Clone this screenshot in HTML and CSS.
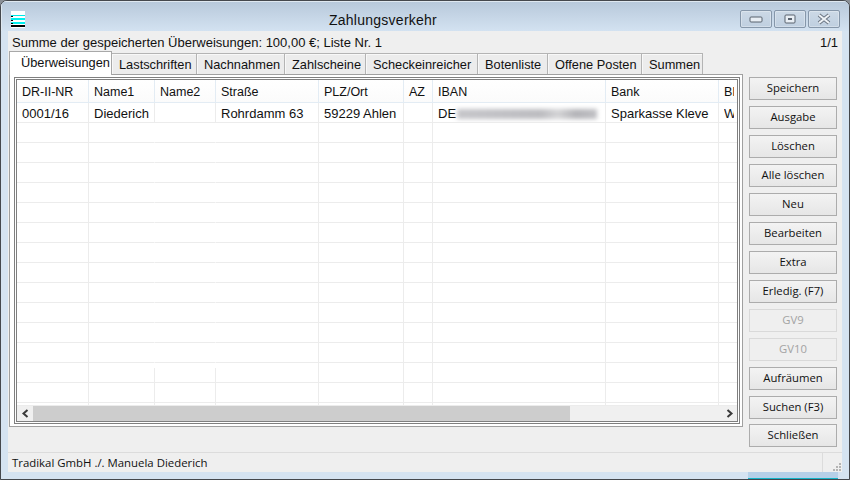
FILE: index.html
```html
<!DOCTYPE html>
<html lang="de">
<head>
<meta charset="utf-8">
<title>Zahlungsverkehr</title>
<link rel="stylesheet" href="styles.css">
</head>
<body>
<div class="window">
  <header class="titlebar">
    <svg class="app-icon" width="14" height="17" viewBox="0 0 14 17">
      <rect width="14" height="17" fill="#fff"/>
      <rect y="4" width="14" height="1" fill="#00e8e8"/>
      <rect y="7" width="14" height="2" fill="#00f0f0"/>
      <rect y="11" width="14" height="2" fill="#00f0f0"/>
      <rect y="14" width="14" height="2" fill="#000"/>
      <rect y="5" width="2" height="1" fill="#000"/>
      <rect y="9" width="2" height="1" fill="#000"/>
      <rect y="12" width="2" height="1" fill="#000"/>
    </svg>
    <h1 class="title">Zahlungsverkehr</h1>
    <div class="controls">
      <div class="ctl"><svg width="14" height="8" viewBox="0 0 14 8"><rect x="1" y="2" width="12" height="5" rx="1" fill="#e8eef4" stroke="#59626e"/></svg></div>
      <div class="ctl"><svg width="14" height="11" viewBox="0 0 14 11"><rect x="2" y="1" width="10" height="8" rx="1" fill="#e8eef4" stroke="#59626e"/><rect x="5" y="4" width="4" height="2" fill="#59626e"/></svg></div>
      <div class="ctl"><svg width="16" height="12" viewBox="0 0 16 12"><path d="M3 2 L13 10 M13 2 L3 10" stroke="#6c7683" stroke-width="4"/><path d="M3 2 L13 10 M13 2 L3 10" stroke="#eef2f6" stroke-width="2"/></svg></div>
    </div>
  </header>

  <div class="client">
    <div class="infobar">
      <span>Summe der gespeicherten Überweisungen: 100,00 €; Liste Nr. 1</span>
      <span>1/1</span>
    </div>
    <div class="main">
      <section class="tabs-area">
        <nav class="tabstrip">
          <div class="tab active">Überweisungen</div>
          <div class="tab w85">Lastschriften</div>
          <div class="tab w88">Nachnahmen</div>
          <div class="tab w81">Zahlscheine</div>
          <div class="tab w112">Scheckeinreicher</div>
          <div class="tab w70">Botenliste</div>
          <div class="tab w94">Offene Posten</div>
          <div class="tab w61">Summen</div>
        </nav>
        <div class="panel">
          <div class="listview">
            <div class="grid">
              <div class="row head">
                <div class="c">DR-II-NR</div><div class="c">Name1</div><div class="c">Name2</div><div class="c">Straße</div><div class="c">PLZ/Ort</div><div class="c">AZ</div><div class="c">IBAN</div><div class="c">Bank</div><div class="c last"><span class="clip">BIC</span></div>
              </div>
              <div class="row">
                <div class="c">0001/16</div><div class="c">Diederich</div><div class="c"></div><div class="c">Rohrdamm 63</div><div class="c">59229 Ahlen</div><div class="c"></div><div class="c">DE<span class="blur"></span></div><div class="c">Sparkasse Kleve</div><div class="c last"><span class="clip">WE</span></div>
              </div>
              <div class="row gap"><div class="c"></div><div class="c off"></div><div class="c off"></div><div class="c"></div><div class="c"></div><div class="c"></div><div class="c"></div><div class="c"></div><div class="c last"></div></div>
              <div class="row gap"><div class="c"></div><div class="c off"></div><div class="c off"></div><div class="c"></div><div class="c"></div><div class="c"></div><div class="c"></div><div class="c"></div><div class="c last"></div></div>
              <div class="row gap"><div class="c"></div><div class="c off"></div><div class="c off"></div><div class="c"></div><div class="c"></div><div class="c"></div><div class="c"></div><div class="c"></div><div class="c last"></div></div>
              <div class="row gap"><div class="c"></div><div class="c off"></div><div class="c off"></div><div class="c"></div><div class="c"></div><div class="c"></div><div class="c"></div><div class="c"></div><div class="c last"></div></div>
              <div class="row gap"><div class="c"></div><div class="c off"></div><div class="c off"></div><div class="c"></div><div class="c"></div><div class="c"></div><div class="c"></div><div class="c"></div><div class="c last"></div></div>
              <div class="row gap"><div class="c"></div><div class="c off"></div><div class="c off"></div><div class="c"></div><div class="c"></div><div class="c"></div><div class="c"></div><div class="c"></div><div class="c last"></div></div>
              <div class="row gap"><div class="c"></div><div class="c off"></div><div class="c off"></div><div class="c"></div><div class="c"></div><div class="c"></div><div class="c"></div><div class="c"></div><div class="c last"></div></div>
              <div class="row gap"><div class="c"></div><div class="c off"></div><div class="c off"></div><div class="c"></div><div class="c"></div><div class="c"></div><div class="c"></div><div class="c"></div><div class="c last"></div></div>
              <div class="row gap"><div class="c"></div><div class="c off"></div><div class="c off"></div><div class="c"></div><div class="c"></div><div class="c"></div><div class="c"></div><div class="c"></div><div class="c last"></div></div>
              <div class="row gap"><div class="c"></div><div class="c off"></div><div class="c off"></div><div class="c"></div><div class="c"></div><div class="c"></div><div class="c"></div><div class="c"></div><div class="c last"></div></div>
              <div class="row gap"><div class="c"></div><div class="c off"></div><div class="c off"></div><div class="c"></div><div class="c"></div><div class="c"></div><div class="c"></div><div class="c"></div><div class="c last"></div></div>
              <div class="row gap"><div class="c"></div><div class="c off"></div><div class="c off"></div><div class="c"></div><div class="c"></div><div class="c"></div><div class="c"></div><div class="c"></div><div class="c last"></div></div>
              <div class="row gap"><div class="c"></div><div class="c part"></div><div class="c part"></div><div class="c"></div><div class="c"></div><div class="c"></div><div class="c"></div><div class="c"></div><div class="c last"></div></div>
              <div class="row"><div class="c"></div><div class="c"></div><div class="c"></div><div class="c"></div><div class="c"></div><div class="c"></div><div class="c"></div><div class="c"></div><div class="c last"></div></div>
              <div class="row stub"><div class="c"></div><div class="c"></div><div class="c"></div><div class="c"></div><div class="c"></div><div class="c"></div><div class="c"></div><div class="c"></div><div class="c last"></div></div>
            </div>
            <div class="hscroll">
              <div class="arrow"><svg width="9" height="9" viewBox="0 0 9 9"><path d="M6.5 1 L2.5 4.5 L6.5 8" fill="none" stroke="#3a3a3a" stroke-width="2"/></svg></div>
              <div class="thumb"></div>
              <div class="track"></div>
              <div class="arrow"><svg width="9" height="9" viewBox="0 0 9 9"><path d="M2.5 1 L6.5 4.5 L2.5 8" fill="none" stroke="#3a3a3a" stroke-width="2"/></svg></div>
            </div>
          </div>
        </div>
      </section>
      <aside class="buttons">
        <div class="btn">Speichern</div>
        <div class="btn">Ausgabe</div>
        <div class="btn">Löschen</div>
        <div class="btn">Alle löschen</div>
        <div class="btn">Neu</div>
        <div class="btn">Bearbeiten</div>
        <div class="btn">Extra</div>
        <div class="btn">Erledig. (F7)</div>
        <div class="btn disabled">GV9</div>
        <div class="btn disabled">GV10</div>
        <div class="btn">Aufräumen</div>
        <div class="btn">Suchen (F3)</div>
        <div class="btn tail">Schließen</div>
      </aside>
    </div>
    <footer class="statusbar">
      <div class="status-text">Tradikal GmbH ./. Manuela Diederich</div>
      <div class="grip">
        <svg width="10" height="10" viewBox="0 0 10 10" fill="#b4b4b4">
          <rect x="7" y="1" width="2" height="2"/><rect x="4" y="4" width="2" height="2"/><rect x="7" y="4" width="2" height="2"/><rect x="1" y="7" width="2" height="2"/><rect x="4" y="7" width="2" height="2"/><rect x="7" y="7" width="2" height="2"/>
        </svg>
      </div>
    </footer>
  </div>
  <div class="bottom-frame"><div class="peek"></div></div>
</div>
</body>
</html>
```
FILE: styles.css
```css
* { box-sizing: border-box; }
html, body { margin: 0; padding: 0; background: #8a8f96; }
body { width: 850px; height: 480px; overflow: hidden; }

.window {
  width: 850px;
  height: 480px;
  display: flex;
  flex-direction: column;
  background: #d5e3f1;
  border: 1px solid #45484d;
  border-radius: 7px 7px 0 0;
  overflow: hidden;
  font-family: "Liberation Sans", Arial, sans-serif;
  font-size: 13px;
  color: #111;
}

.titlebar {
  height: 30px;
  flex: none;
  position: relative;
  display: flex;
  align-items: flex-start;
  background: linear-gradient(#b7c8da, #d3e2f1);
  box-shadow: inset 1px 1px 0 #dfe8f0;
}
.app-icon { margin: 10px 0 0 10px; flex: none; }
.title {
  position: absolute;
  left: 328px;
  top: 10px;
  margin: 0;
  font-size: 14px;
  line-height: 18px;
  font-weight: 400;
  letter-spacing: 0.25px;
  color: #111;
}
.controls { margin: 9px 0 0 auto; padding-right: 9px; display: flex; gap: 2px; }
.ctl {
  width: 32px;
  height: 18px;
  display: flex;
  align-items: center;
  justify-content: center;
  border: 1px solid #8697aa;
  border-radius: 2px;
  background: linear-gradient(#ccd9e6, #bfcfe0);
  box-shadow: inset 0 0 0 1px rgba(255,255,255,.3);
}

.client {
  flex: 1;
  margin: 0 7px;
  display: flex;
  flex-direction: column;
  background: #efefef;
  min-height: 0;
}
.infobar {
  height: 20px;
  flex: none;
  padding: 3px 4px 0 4px;
  display: flex;
  justify-content: space-between;
  line-height: 18px;
}

.main { flex: 1; display: flex; min-height: 0; padding-left: 1px; }
.tabs-area { width: 734px; flex: none; }
.tabstrip {
  height: 23px;
  display: flex;
  align-items: flex-end;
  position: relative;
  z-index: 1;
  font-size: 12.8px;
}
.tab {
  height: 21px;
  padding-left: 7px;
  white-space: nowrap;
  overflow: hidden;
  line-height: 22px;
  background: #ececec;
  border: 1px solid #b4b4b4;
  border-bottom: 0;
  border-left-width: 0;
  box-shadow: inset 1px 1px 0 #f8f8f8;
}
.tab.active {
  width: 103px;
  height: 24px;
  padding-left: 11px;
  line-height: 22px;
  background: #fff;
  border-left-width: 1px;
  border-color: #a8a8a8;
  margin-bottom: -1px;
  box-shadow: none;
}
.w85 { width: 85px; } .w88 { width: 88px; } .w81 { width: 81px; }
.w112 { width: 112px; } .w70 { width: 70px; } .w94 { width: 94px; } .w61 { width: 61px; }

.panel {
  height: 353px;
  padding: 2px 2px 3px 4px;
  background: #fff;
  border: 1px solid #a0a0a0;
}
.listview {
  height: 347px;
  border: 3px double #7f7f7f;
  display: flex;
  flex-direction: column;
  background: #fff;
}
.grid { height: 326px; overflow: hidden; flex: none; }
.row {
  display: grid;
  grid-template-columns: 72px 66px 61px 103px 85px 29px 173px 113px 20px;
  height: 20px;
}
.row.head { height: 23px; background: linear-gradient(#fff, #fbfbfb); font-size: 12.5px; }
.row.stub { height: 3px; }
.c {
  padding-left: 5px;
  line-height: 21px;
  white-space: nowrap;
  overflow: hidden;
  border-right: 1px solid #ececec;
  border-bottom: 1px solid #ececec;
}
.head .c {
  line-height: 24px;
  border-color: #e3ecf4;
}
.c.off { border-right-color: transparent; }
.c.part {
  border-right: 1px solid transparent;
  background: linear-gradient(#ececec, #ececec) right bottom / 1px 15px no-repeat;
  background-origin: border-box;
  background-clip: border-box;
}
.c.last { border-right: 0; }
.clip { display: block; width: 10px; overflow: hidden; }
.blur {
  display: inline-block;
  width: 140px;
  height: 10px;
  margin-left: 1px;
  vertical-align: -1px;
  background: linear-gradient(90deg, #c6c6ca, #bcbcc0 60%, #d4d4d6 72%, #b4b4b8 85%, #c0c0c4);
  filter: blur(2px);
}

.hscroll { height: 15px; flex: none; display: flex; background: #f0f0f0; }
.arrow { width: 16px; flex: none; display: flex; align-items: center; justify-content: center; }
.thumb { width: 537px; background: #cdcdcd; flex: none; }
.track { flex: 1; }

.buttons {
  width: 88px;
  margin: 26px 0 0 6px;
  display: flex;
  flex-direction: column;
  gap: 6px;
  flex: none;
  font-family: "Open Sans", "Liberation Sans", sans-serif;
  font-size: 11.3px;
}
.btn {
  height: 23px;
  flex: none;
  text-align: center;
  line-height: 20px;
  border: 1px solid #acacac;
  background: linear-gradient(#f3f3f3, #e6e6e6);
}
.btn.tail { margin-top: -1px; }
.btn.disabled {
  border-color: #d9d9d9;
  background: #efefef;
  color: #a3a3a3;
}

.statusbar {
  height: 20px;
  flex: none;
  display: flex;
  border-top: 1px solid #dcdcdc;
  line-height: 19px;
  font-family: "Open Sans", "Liberation Sans", sans-serif;
  font-size: 11.4px;
}
.status-text { flex: 1; padding-left: 4px; }
.grip {
  width: 20px;
  flex: none;
  border-left: 1px solid #dcdcdc;
  display: flex;
  align-items: flex-end;
  justify-content: flex-end;
}

.bottom-frame {
  height: 7px;
  flex: none;
  padding-left: 747px;
  display: flex;
  align-items: flex-end;
}
.peek {
  width: 90px;
  height: 7px;
  background: #b6d0e8;
  border-bottom: 1px solid #14b4c8;
}
```
